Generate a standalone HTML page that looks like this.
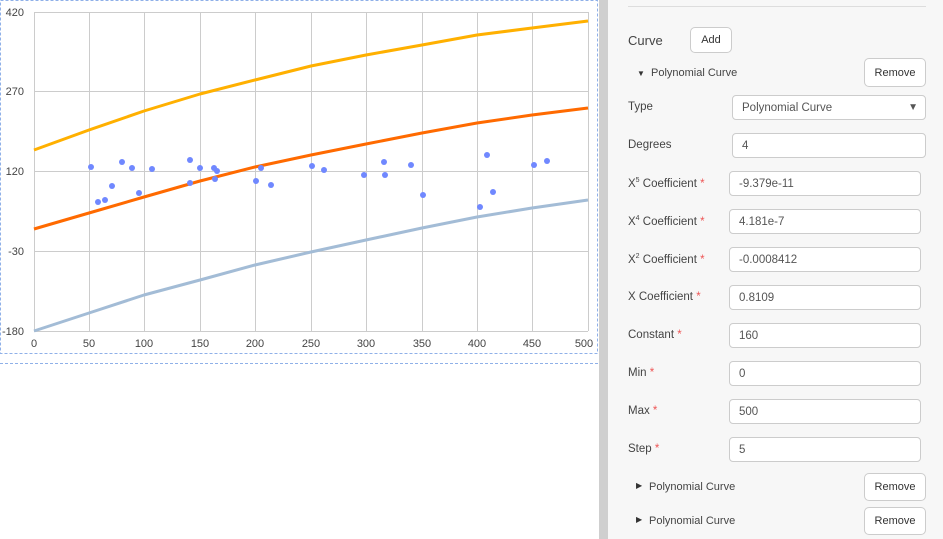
<!DOCTYPE html><html><head><style>
*{box-sizing:border-box}
body{margin:0;width:943px;height:539px;overflow:hidden;background:#fff;font-family:"Liberation Sans",sans-serif;position:relative}
.ax{font-size:11px;fill:#444;font-family:"Liberation Sans",sans-serif}
.panel{position:absolute;left:608px;top:0;width:335px;height:539px;background:#f7f7f7}
.bar{position:absolute;left:599px;top:0;width:9px;height:539px;background:#cfcfcf}
.lbl{position:absolute;left:628px;font-size:11.5px;color:#444}
.lbl sup{font-size:7px}
.req{color:#e55}
.inp{position:absolute;height:25px;background:#fff;border:1px solid #ccc;border-radius:4px;font-size:11.5px;color:#555;padding:6px 9px}
.btn{position:absolute;background:#fff;border:1px solid #ccc;border-radius:5px;font-size:11px;color:#333;display:flex;align-items:center;justify-content:center}
.tri{position:absolute;font-size:8px;color:#333}
</style></head><body>
<svg width="600" height="370" style="position:absolute;left:0;top:0">
<rect x="0.5" y="0.5" width="597" height="353" fill="none" stroke="#8fb0e8" stroke-dasharray="3,2"/>
<line x1="0" y1="363.5" x2="598" y2="363.5" stroke="#8fb0e8" stroke-dasharray="3,2"/>
<g stroke="#ccc" stroke-width="1">
<line x1="34" y1="12.5" x2="588" y2="12.5"/><line x1="34" y1="91.5" x2="588" y2="91.5"/><line x1="34" y1="171.5" x2="588" y2="171.5"/><line x1="34" y1="251.5" x2="588" y2="251.5"/><line x1="34" y1="331.5" x2="588" y2="331.5"/>
<line x1="34.5" y1="12" x2="34.5" y2="331"/><line x1="89.5" y1="12" x2="89.5" y2="331"/><line x1="144.5" y1="12" x2="144.5" y2="331"/><line x1="200.5" y1="12" x2="200.5" y2="331"/><line x1="255.5" y1="12" x2="255.5" y2="331"/><line x1="311.5" y1="12" x2="311.5" y2="331"/><line x1="366.5" y1="12" x2="366.5" y2="331"/><line x1="422.5" y1="12" x2="422.5" y2="331"/><line x1="477.5" y1="12" x2="477.5" y2="331"/><line x1="532.5" y1="12" x2="532.5" y2="331"/><line x1="588.5" y1="12" x2="588.5" y2="331"/>
</g>
<g fill="none" stroke-width="3" stroke-linejoin="round">
<path stroke="#ffb000" d="M34,150 L89,130 L144,111 L200,94 L255,80 L311,66 L366,55 L422,45 L477,35 L532,28 L588,21"/>
<path stroke="#ff6a00" d="M34,229 L89,213 L144,197 L200,181 L255,167 L311,155 L366,144 L422,133 L477,123 L532,115 L588,108"/>
<path stroke="#a3bcd6" d="M34,331 L89,313 L144,295 L200,280 L255,265 L311,252 L366,240 L422,228 L477,217 L532,208 L588,200"/>
</g>
<g fill="#7088ff">
<circle cx="91" cy="167" r="3"/><circle cx="98" cy="202" r="3"/><circle cx="105" cy="200" r="3"/><circle cx="112" cy="186" r="3"/><circle cx="122" cy="162" r="3"/><circle cx="132" cy="168" r="3"/><circle cx="139" cy="193" r="3"/><circle cx="152" cy="169" r="3"/><circle cx="190" cy="160" r="3"/><circle cx="190" cy="183" r="3"/><circle cx="200" cy="168" r="3"/><circle cx="214" cy="168" r="3"/><circle cx="217" cy="171" r="3"/><circle cx="215" cy="179" r="3"/><circle cx="256" cy="181" r="3"/><circle cx="261" cy="168" r="3"/><circle cx="271" cy="185" r="3"/><circle cx="312" cy="166" r="3"/><circle cx="324" cy="170" r="3"/><circle cx="364" cy="175" r="3"/><circle cx="384" cy="162" r="3"/><circle cx="385" cy="175" r="3"/><circle cx="411" cy="165" r="3"/><circle cx="423" cy="195" r="3"/><circle cx="480" cy="207" r="3"/><circle cx="487" cy="155" r="3"/><circle cx="493" cy="192" r="3"/><circle cx="534" cy="165" r="3"/><circle cx="547" cy="161" r="3"/>
</g>
<g class="ax" text-anchor="end">
<text x="24" y="16">420</text><text x="24" y="95">270</text><text x="24" y="175">120</text><text x="24" y="255">-30</text><text x="24" y="335">-180</text>
</g>
<g class="ax" text-anchor="middle">
<text x="34" y="347">0</text><text x="89" y="347">50</text><text x="144" y="347">100</text><text x="200" y="347">150</text><text x="255" y="347">200</text><text x="311" y="347">250</text><text x="366" y="347">300</text><text x="422" y="347">350</text><text x="477" y="347">400</text><text x="532" y="347">450</text><text x="584" y="347">500</text>
</g>
</svg>
<div class="bar"></div>
<div class="panel"></div>
<div style="position:absolute;left:628px;top:6px;width:298px;height:1px;background:#ddd"></div>
<div class="lbl" style="top:33px;font-size:13px">Curve</div>
<div class="btn" style="left:690px;top:27px;width:42px;height:26px">Add</div>
<div class="tri" style="left:637px;top:69px">▼</div>
<div class="lbl" style="left:651px;top:67px;font-size:11px">Polynomial Curve</div>
<div class="btn" style="left:864px;top:58px;width:62px;height:29px">Remove</div>
<div class="lbl" style="top:101px">Type</div>
<div class="inp" style="left:732px;top:95px;width:194px">Polynomial Curve<span style="position:absolute;right:7px;top:6px;font-size:10px">▼</span></div>
<div class="lbl" style="top:139px">Degrees</div>
<div class="inp" style="left:732px;top:133px;width:194px">4</div>
<div class="lbl" style="top:177px">X<sup>5</sup> Coefficient <span class="req">*</span></div>
<div class="inp" style="left:729px;top:171px;width:192px">-9.379e-11</div>
<div class="lbl" style="top:215px">X<sup>4</sup> Coefficient <span class="req">*</span></div>
<div class="inp" style="left:729px;top:209px;width:192px">4.181e-7</div>
<div class="lbl" style="top:253px">X<sup>2</sup> Coefficient <span class="req">*</span></div>
<div class="inp" style="left:729px;top:247px;width:192px">-0.0008412</div>
<div class="lbl" style="top:291px">X Coefficient <span class="req">*</span></div>
<div class="inp" style="left:729px;top:285px;width:192px">0.8109</div>
<div class="lbl" style="top:329px">Constant <span class="req">*</span></div>
<div class="inp" style="left:729px;top:323px;width:192px">160</div>
<div class="lbl" style="top:367px">Min <span class="req">*</span></div>
<div class="inp" style="left:729px;top:361px;width:192px">0</div>
<div class="lbl" style="top:405px">Max <span class="req">*</span></div>
<div class="inp" style="left:729px;top:399px;width:192px">500</div>
<div class="lbl" style="top:443px">Step <span class="req">*</span></div>
<div class="inp" style="left:729px;top:437px;width:192px">5</div>
<div class="tri" style="left:636px;top:481px">▶</div>
<div class="lbl" style="left:649px;top:481px;font-size:11px">Polynomial Curve</div>
<div class="btn" style="left:864px;top:473px;width:62px;height:28px">Remove</div>
<div class="tri" style="left:636px;top:515px">▶</div>
<div class="lbl" style="left:649px;top:515px;font-size:11px">Polynomial Curve</div>
<div class="btn" style="left:864px;top:507px;width:62px;height:28px">Remove</div>
</body></html>
